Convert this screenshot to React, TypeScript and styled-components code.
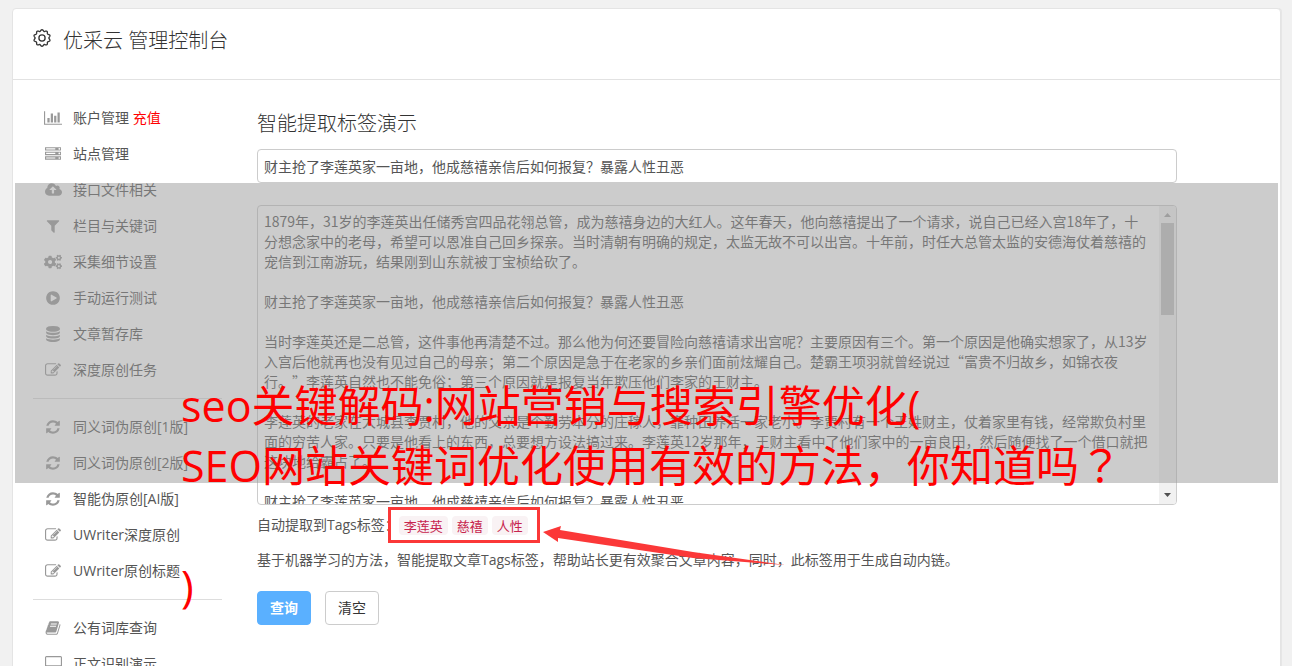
import React from "react";
import styled, { createGlobalStyle, css } from "styled-components";
import { FaCogs } from "react-icons/fa";

const sans = `"Open Sans", "Noto Sans CJK SC", sans-serif`;
const cjk = `"Noto Sans CJK SC", sans-serif`;

const GlobalStyle = createGlobalStyle`
  *, *::before, *::after { box-sizing: border-box; }
  body {
    margin: 0;
    background: #f1f1f1;
    color: #555;
    font-family: ${sans};
    font-size: 14px;
    line-height: 20px;
    text-spacing-trim: space-all;
  }
`;

const Page = styled.div`
  position: relative;
  display: flex;
  height: 100vh;
  overflow: hidden;
  padding: 8px 11px 0 12px;
`;

const Panel = styled.div`
  flex: 1;
  min-width: 0;
  align-self: flex-start;
  min-height: 100vh;
  background: #fff;
  border: 1px solid #e4e4e4;
  border-radius: 4px;
  box-shadow: 1px 0 0 #e6e6e6;
`;

const Header = styled.header`
  display: flex;
  align-items: center;
  gap: 12px;
  height: 71px;
  padding: 0 20px 12px;
  border-bottom: 1px solid #e2e2e2;
  color: #333;
`;

const Title = styled.h1`
  margin: 0;
  padding-top: 5px;
  font-size: 20px;
  line-height: 28px;
  font-weight: 300;
`;

const Columns = styled.div`
  display: flex;
  gap: 35px;
  padding: 20px 103px 0 20px;
`;

const Sidebar = styled.nav`
  flex: none;
  width: 189px;
`;

const NavGroup = styled.ul`
  list-style: none;
  margin: 0;
  padding: 0;

  & + & {
    border-top: 1px solid #ddd;
    margin-top: 10px;
    padding-top: 10px;
  }
`;

const NavLink = styled.a`
  display: flex;
  align-items: center;
  gap: 10px;
  height: 36px;
  padding-left: 10px;
  color: #555;
  text-decoration: none;
  white-space: nowrap;
`;

const NavIcon = styled.span`
  display: flex;
  justify-content: center;
  width: 20px;
  color: #999;
`;

const Hot = styled.span`
  color: #f00;
`;

const Main = styled.main`
  flex: 1;
  min-width: 0;
  padding-top: 12px;
`;

const SectionTitle = styled.h2`
  margin: 0 0 13px;
  font-size: 20px;
  line-height: 24px;
  font-weight: 300;
  color: #333;
`;

const fieldFrame = css`
  border: 1px solid #ccc;
  border-radius: 4px;
  background: #fff;
`;

const fieldText = css`
  color: #555;
  font-family: ${cjk};
  font-size: 14px;
  line-height: 20px;
  text-spacing-trim: space-all;
  outline: none;
`;

const TextInput = styled.input`
  ${fieldFrame}
  ${fieldText}
  display: block;
  width: 100%;
  height: 34px;
  padding: 6px;
`;

const ArticleFrame = styled.div`
  ${fieldFrame}
  display: flex;
  height: 300px;
  margin-top: 22px;
  overflow: hidden;
`;

const ArticleText = styled.textarea`
  ${fieldText}
  flex: 1;
  min-width: 0;
  padding: 5px 8px 5px 6px;
  border: 0;
  resize: none;
  background: transparent;
  scrollbar-width: none;
`;

const ScrollTrack = styled.div`
  display: flex;
  flex-direction: column;
  align-items: center;
  width: 17px;
  background: #f1f1f1;
`;

const ScrollThumb = styled.div`
  width: 13px;
  height: 92px;
  margin-bottom: auto;
  background: #c1c1c1;
`;

const ScrollArrow = styled.svg`
  display: block;
  width: 17px;
  height: 17px;
`;

const TagLine = styled.div`
  display: flex;
  align-items: center;
  height: 20px;
  margin-top: 10px;
`;

const TagGroup = styled.div`
  position: relative;
  display: flex;
  gap: 4px;
`;

const Tag = styled.code`
  padding: 0 5px;
  border-radius: 4px;
  background: #f9f2f4;
  color: #c7254e;
  font-family: ${cjk};
  font-size: 13px;
  line-height: 19px;
`;

const Highlight = styled.div`
  position: absolute;
  inset: -9px -12px -8px -11px;
  border: 3px solid #fb3838;
`;

const Arrow = styled.svg`
  position: absolute;
  left: calc(100% + 15px);
  top: 7px;
  width: 242px;
  height: 44px;
`;

const Note = styled.p`
  margin: 15px 0 21px;
`;

const Actions = styled.div`
  display: flex;
  gap: 14px;
`;

const Button = styled.button<{ $primary?: boolean }>`
  height: 34px;
  padding: 0 12px;
  border-radius: 4px;
  font-family: ${sans};
  font-size: 14px;
  line-height: 20px;
  border: 1px solid ${(p) => (p.$primary ? "#5ab0ff" : "#ccc")};
  background: ${(p) => (p.$primary ? "#5ab0ff" : "#fff")};
  color: ${(p) => (p.$primary ? "#fff" : "#333")};
  font-weight: ${(p) => (p.$primary ? 700 : 400)};
`;

const Band = styled.div`
  position: absolute;
  top: 183px;
  left: 15px;
  right: 14px;
  height: 300px;
  background: rgba(153, 153, 153, 0.5);
  pointer-events: none;
`;

const Caption = styled.p`
  position: absolute;
  top: 376px;
  left: 181px;
  margin: 0;
  color: #f00;
  font-size: 43px;
  line-height: 60px;
  white-space: nowrap;
  pointer-events: none;
`;

const CenteredMark = styled.span`
  font-family: "Noto Sans CJK JP", sans-serif;
  line-height: 1;
`;

const paths = {
  chart:
    "M640 896v512h-256v-512h256zm384-512v1024h-256v-1024h256zm1024 1152v128h-2048v-1536h128v1408h1920zm-640-896v768h-256v-768h256zm384-384v1152h-256v-1152h256z",
  server:
    "M128 1408h1024v-128h-1024v128zm0-512h1024v-128h-1024v128zm1568 448q0-40-28-68t-68-28-68 28-28 68 28 68 68 28 68-28 28-68zm-1568-960h1024v-128h-1024v128zm1568 448q0-40-28-68t-68-28-68 28-28 68 28 68 68 28 68-28 28-68zm0-512q0-40-28-68t-68-28-68 28-28 68 28 68 68 28 68-28 28-68zm96 832v384h-1792v-384h1792zm0-512v384h-1792v-384h1792zm0-512v384h-1792v-384h1792z",
  upload:
    "M1216 864q0-14-9-23l-352-352q-9-9-23-9t-23 9l-351 351q-10 12-10 24 0 14 9 23t23 9h224v352q0 13 9.5 22.5t22.5 9.5h192q13 0 22.5-9.5t9.5-22.5v-352h224q13 0 22.5-9.5t9.5-22.5zm640 288q0 159-112.5 271.5t-271.5 112.5h-1088q-185 0-316.5-131.5t-131.5-316.5q0-130 70-240t188-165q-2-30-2-43 0-212 150-362t362-150q156 0 285.5 87t188.5 231q71-62 166-62 106 0 181 75t75 181q0 76-41 138 130 31 213.5 135.5t83.5 238.5z",
  filter:
    "M1595 295q17 41-14 70l-493 493v742q0 42-39 59-13 5-25 5-27 0-45-19l-256-256q-19-19-19-45v-486l-493-493q-31-29-14-70 17-39 59-39h1280q42 0 59 39z",
  play:
    "M896 128q209 0 385.5 103t279.5 279.5 103 385.5-103 385.5-279.5 279.5-385.5 103-385.5-103-279.5-279.5-103-385.5 103-385.5 279.5-279.5 385.5-103zm384 823q32-18 32-55t-32-55l-544-320q-31-19-64-1-32 19-32 56v640q0 37 32 56 16 8 32 8 17 0 32-9z",
  database:
    "M896 768q237 0 443-43t325-127v170q0 69-103 128t-280 93.5-385 34.5-385-34.5-280-93.5-103-128v-170q119 84 325 127t443 43zm0 768q237 0 443-43t325-127v170q0 69-103 128t-280 93.5-385 34.5-385-34.5-280-93.5-103-128v-170q119 84 325 127t443 43zm0-384q237 0 443-43t325-127v170q0 69-103 128t-280 93.5-385 34.5-385-34.5-280-93.5-103-128v-170q119 84 325 127t443 43zm0-1152q208 0 385 34.5t280 93.5 103 128v128q0 69-103 128t-280 93.5-385 34.5-385-34.5-280-93.5-103-128v-128q0-69 103-128t280-93.5 385-34.5z",
  edit:
    "M888 1184l116-116-152-152-116 116v56h96v96h56zm440-720q-16-16-33 1l-350 350q-17 17-1 33t33-1l350-350q17-17 1-33zm80 594v190q0 119-84.5 203.5t-203.5 84.5h-832q-119 0-203.5-84.5t-84.5-203.5v-832q0-119 84.5-203.5t203.5-84.5h832q63 0 117 25 15 7 18 23 3 17-9 29l-49 49q-14 14-32 8-23-6-45-6h-832q-66 0-113 47t-47 113v832q0 66 47 113t113 47h832q66 0 113-47t47-113v-126q0-13 9-22l64-64q15-15 35-7t20 29zm-96-738l288 288-672 672h-288v-288zm444 132l-92 92-288-288 92-92q28-28 68-28t68 28l152 152q28 28 28 68t-28 68z",
  refresh:
    "M1639 1056q0 5-1 7-64 268-268 434.5t-478 166.5q-146 0-282.5-55t-243.5-157l-129 129q-19 19-45 19t-45-19-19-45v-448q0-26 19-45t45-19h448q26 0 45 19t19 45-19 45l-137 137q71 66 161 102t187 36q134 0 250-65t186-179q11-17 53-117 8-23 30-23h192q13 0 22.5 9.5t9.5 22.5zm25-800v448q0 26-19 45t-45 19h-448q-26 0-45-19t-19-45 19-45l138-138q-148-137-349-137-134 0-250 65t-186 179q-11 17-53 117-8 23-30 23h-199q-13 0-22.5-9.5t-9.5-22.5v-7q65-268 270-434.5t480-166.5q146 0 284 55.5t245 156.5l130-129q19-19 45-19t45 19 19 45z",
  book:
    "M1703 478q40 57 18 129l-275 906q-19 64-76.5 107.5t-122.5 43.5h-923q-77 0-148.5-53.5t-99.5-131.5q-24-67-2-127 0-4 3-27t4-37q1-8-3-21.5t-3-19.5q2-11 8-21t16.5-23.5 16.5-23.5q23-38 45-91.5t30-91.5q3-10 .5-30t-.5-28q3-11 17-28t17-23q21-36 42-92t25-90q1-9-2.5-32t.5-28q4-13 22-30.5t22-22.5q19-26 42.5-84.5t27.5-96.5q1-8-3-25.5t-2-26.5q2-8 9-18t18-23 17-21q8-12 16.5-30.5t15-35 16-36 19.5-32 26.5-23.5 36-11.5 47.5 5.5l-1 3q38-9 51-9h761q74 0 114 56t18 130l-274 906q-36 119-71.5 153.5t-128.5 34.5h-869q-27 0-38 15-11 16-1 43 24 70 144 70h923q29 0 56-15.5t35-41.5l300-987q7-22 5-57 38 15 59 43zm-1064 2q-4 13 2 22.5t20 9.5h608q13 0 25.5-9.5t16.5-22.5l21-64q4-13-2-22.5t-20-9.5h-608q-13 0-25.5 9.5t-16.5 22.5zm-83 256q-4 13 2 22.5t20 9.5h608q13 0 25.5-9.5t16.5-22.5l21-64q4-13-2-22.5t-20-9.5h-608q-13 0-25.5 9.5t-16.5 22.5z",
  desktop:
    "M1792 992v-832q0-13-9.500-22.500t-22.500-9.500h-1600q-13 0-22.500 9.500t-9.500 22.500v832q0 13 9.500 22.500t22.500 9.500h1600q13 0 22.500-9.500t9.500-22.500zm128-832v1088q0 66-47 113t-113 47h-544q0 37 16 77.500t32 71 16 43.500q0 26-19 45t-45 19h-512q-26 0-45-19t-19-45q0-14 16-44t32-70 16-78h-544q-66 0-113-47t-47-113v-1088q0-66 47-113t113-47h1600q66 0 113 47t47 113z",
};

type IconName = keyof typeof paths | "cogs";

const viewBoxes: Partial<Record<IconName, [number, number]>> = {
  chart: [0, 2048],
  upload: [-64, 1920],
  desktop: [0, 1920],
};

function Icon({ name }: { name: IconName }) {
  if (name === "cogs") return <FaCogs size={18} />;
  const [x, w] = viewBoxes[name] ?? [0, 1792];
  return (
    <svg width={Math.round(w / 112)} height={16} viewBox={`${x} 0 ${w} 1792`} fill="currentColor" aria-hidden="true">
      <path d={paths[name]} />
    </svg>
  );
}

// Scalloped gear rim: a circle whose radius swings once per tooth.
const gearRim =
  Array.from({ length: 120 }, (_, i) => {
    const a = (i / 120) * Math.PI * 2;
    const r = 7.6 + 0.75 * Math.cos(a * 10);
    return `${i ? "L" : "M"}${(9 + r * Math.sin(a)).toFixed(2)} ${(9 - r * Math.cos(a)).toFixed(2)}`;
  }).join("") + "Z";

function GearIcon() {
  return (
    <svg width={18} height={18} viewBox="0 0 18 18" fill="none" stroke="currentColor" strokeWidth={1.3} aria-hidden="true">
      <path d={gearRim} />
      <circle cx={9} cy={9} r={3.1} />
    </svg>
  );
}

const groups: { icon: IconName; label: string; hot?: string }[][] = [
  [
    { icon: "chart", label: "账户管理", hot: "充值" },
    { icon: "server", label: "站点管理" },
    { icon: "upload", label: "接口文件相关" },
    { icon: "filter", label: "栏目与关键词" },
    { icon: "cogs", label: "采集细节设置" },
    { icon: "play", label: "手动运行测试" },
    { icon: "database", label: "文章暂存库" },
    { icon: "edit", label: "深度原创任务" },
  ],
  [
    { icon: "refresh", label: "同义词伪原创[1版]" },
    { icon: "refresh", label: "同义词伪原创[2版]" },
    { icon: "refresh", label: "智能伪原创[AI版]" },
    { icon: "edit", label: "UWriter深度原创" },
    { icon: "edit", label: "UWriter原创标题" },
  ],
  [
    { icon: "book", label: "公有词库查询" },
    { icon: "desktop", label: "正文识别演示" },
  ],
];

const headline = "财主抢了李莲英家一亩地，他成慈禧亲信后如何报复？暴露人性丑恶";

const article = [
  "1879年，31岁的李莲英出任储秀宫四品花翎总管，成为慈禧身边的大红人。这年春天，他向慈禧提出了一个请求，说自己已经入宫18年了，十分想念家中的老母，希望可以恩准自己回乡探亲。当时清朝有明确的规定，太监无故不可以出宫。十年前，时任大总管太监的安德海仗着慈禧的宠信到江南游玩，结果刚到山东就被丁宝桢给砍了。",
  headline,
  "当时李莲英还是二总管，这件事他再清楚不过。那么他为何还要冒险向慈禧请求出宫呢？主要原因有三个。第一个原因是他确实想家了，从13岁入宫后他就再也没有见过自己的母亲；第二个原因是急于在老家的乡亲们面前炫耀自己。楚霸王项羽就曾经说过“富贵不归故乡，如锦衣夜行。”李莲英自然也不能免俗；第三个原因就是报复当年欺压他们李家的王财主。",
  "李莲英的老家在大城县李贾村，他的父亲是个勤劳本分的庄稼人，靠种田养活一家老小。李贾村有一个王姓财主，仗着家里有钱，经常欺负村里面的穷苦人家。只要是他看上的东西，总要想方设法搞过来。李莲英12岁那年，王财主看中了他们家中的一亩良田，然后随便找了一个借口就把这块地给霸占了。",
  headline,
].join("\n\n");

export default function App() {
  return (
    <Page>
      <GlobalStyle />
      <Panel>
        <Header>
          <GearIcon />
          <Title>优采云 管理控制台</Title>
        </Header>
        <Columns>
          <Sidebar>
            {groups.map((items, i) => (
              <NavGroup key={i}>
                {items.map((item) => (
                  <li key={item.label}>
                    <NavLink href="#">
                      <NavIcon>
                        <Icon name={item.icon} />
                      </NavIcon>
                      <span>
                        {item.label} {item.hot && <Hot>{item.hot}</Hot>}
                      </span>
                    </NavLink>
                  </li>
                ))}
              </NavGroup>
            ))}
          </Sidebar>
          <Main>
            <SectionTitle>智能提取标签演示</SectionTitle>
            <TextInput aria-label="标题" defaultValue={headline} />
            <ArticleFrame>
              <ArticleText aria-label="正文" defaultValue={article} spellCheck={false} />
              <ScrollTrack>
                <ScrollArrow viewBox="0 0 17 17">
                  <path d="M5 11L8.500 7L12 11Z" fill="#a3a3a3" />
                </ScrollArrow>
                <ScrollThumb />
                <ScrollArrow viewBox="0 0 17 17">
                  <path d="M5 6L8.500 10L12 6Z" fill="#505050" />
                </ScrollArrow>
              </ScrollTrack>
            </ArticleFrame>
            <TagLine>
              <span>自动提取到Tags标签：</span>
              <TagGroup>
                <Tag>李莲英</Tag>
                <Tag>慈禧</Tag>
                <Tag>人性</Tag>
                <Highlight />
                <Arrow viewBox="0 0 242 44" aria-hidden="true">
                  <path d="M0 9L18 3L17 7L150 29L242 42L150 35L15 15L15 19Z" fill="#fb3838" />
                </Arrow>
              </TagGroup>
            </TagLine>
            <Note>基于机器学习的方法，智能提取文章Tags标签，帮助站长更有效聚合文章内容，同时，此标签用于生成自动内链。</Note>
            <Actions>
              <Button type="button" $primary>
                查询
              </Button>
              <Button type="button">清空</Button>
            </Actions>
          </Main>
        </Columns>
      </Panel>
      <Band />
      <Caption>
        seo关键解码:网站营销与搜索引擎优化(
        <br />
        SEO网站关键词优化使用有效的方法，你知道吗<CenteredMark>？</CenteredMark>
        <br />
        <br />)
      </Caption>
    </Page>
  );
}
